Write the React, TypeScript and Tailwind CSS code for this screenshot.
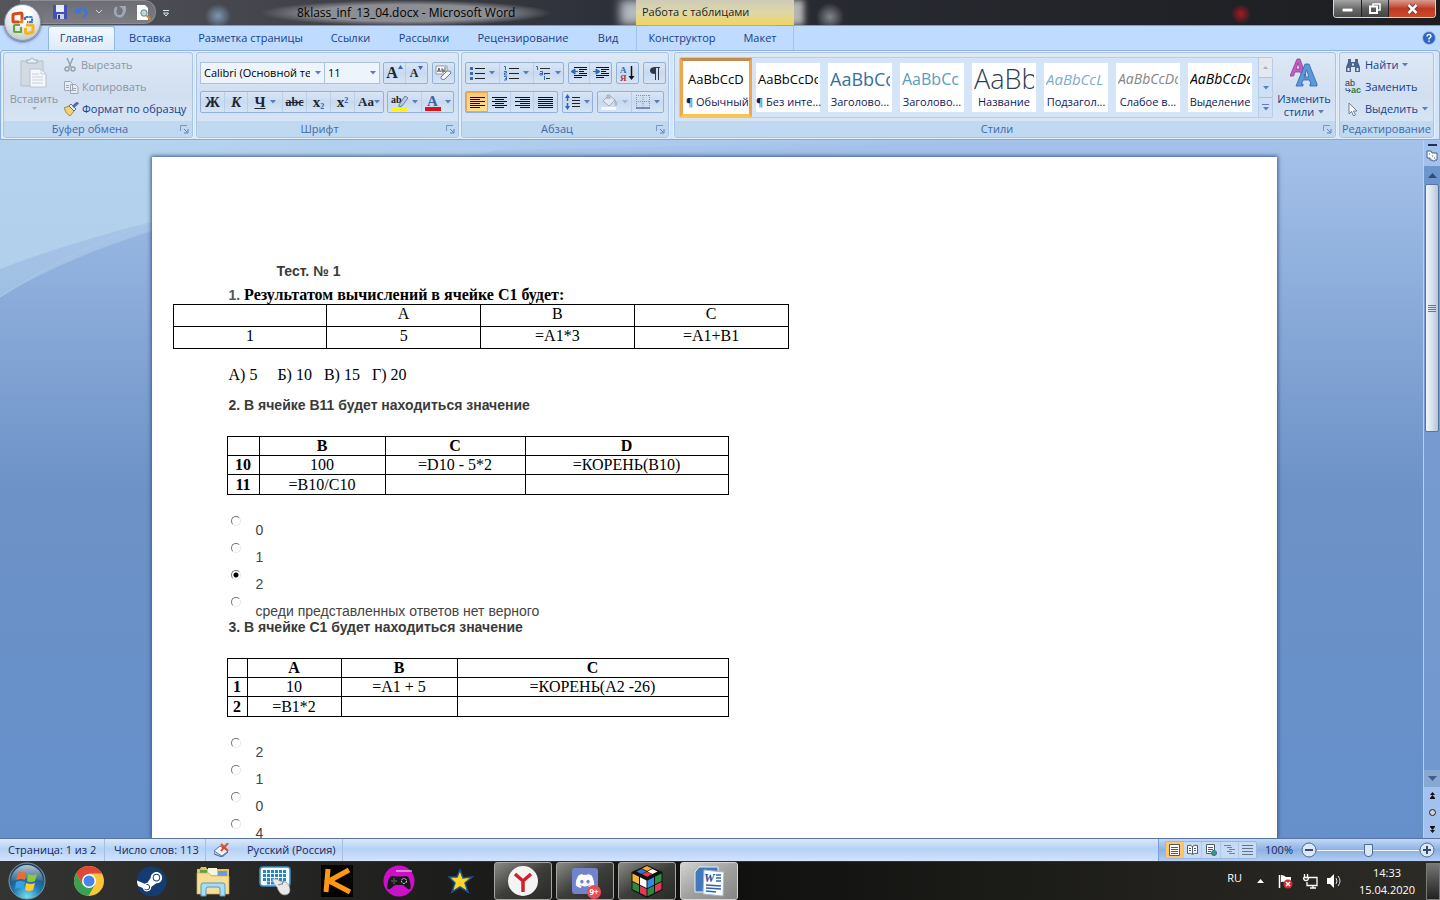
import type { ReactNode } from "react";
import { FaDiscord, FaSteam } from "react-icons/fa";

function Arrow({ className = "" }: { className?: string }) {
  return (
    <svg width="6" height="4" viewBox="0 0 6 4" className={"shrink-0 " + className} aria-hidden="true">
      <path d="M0 0h6L3 3.6z" fill="#5b7fb5" />
    </svg>
  );
}

function Launcher({ label }: { label: string }) {
  return (
    <button aria-label={label} className="flex h-4 w-4 items-center justify-center">
      <svg width="9" height="9" viewBox="0 0 9 9">
        <path d="M.5 6V.5H7" fill="none" stroke="#7696c4" />
        <path d="M4 4l3 3M8 4v4H4" fill="none" stroke="#5c7fb4" />
      </svg>
    </button>
  );
}

function Group({ title, className = "", launcher = true, children }: { title: string; className?: string; launcher?: boolean; children: ReactNode }) {
  return (
    <section
      aria-label={title}
      className={"flex h-[86px] flex-col overflow-hidden rounded-[3px] border border-[#a9c3e2] bg-linear-to-b from-[#dee8f5] via-[#d1dff1] to-[#d9e8f8] shadow-[0_0_0_1px_#e6f0fb] " + className}
    >
      <div className="flex min-h-0 flex-1">{children}</div>
      <div className="flex h-4 shrink-0 items-center bg-[#c1d8f1] text-[11px] text-[#3e6aaa]">
        <span className="flex-1 text-center whitespace-nowrap">{title}</span>
        {launcher && <Launcher label={"Параметры: " + title} />}
      </div>
    </section>
  );
}

function Box({ children, className = "" }: { children: ReactNode; className?: string }) {
  return (
    <div className={"flex h-[22px] items-stretch rounded-[2px] border border-[#93b1d8] bg-linear-to-b from-[#d9e6f6] via-[#c9daf0] to-[#d5e4f6] " + className}>
      {children}
    </div>
  );
}

function Tool({ label, className = "", children }: { label: string; className?: string; children: ReactNode }) {
  return (
    <button aria-label={label} className={"flex items-center justify-center gap-1 border-r border-[#bccfe8] last:border-r-0 " + className}>
      {children}
    </button>
  );
}

function Lines({ widths, align = "left" }: { widths: number[]; align?: "left" | "center" | "right" }) {
  return (
    <svg width="15" height="13" viewBox="0 0 15 13">
      {widths.map((w, i) => (
        <rect key={i} x={align === "left" ? 0 : align === "right" ? 15 - w : (15 - w) / 2} y={1 + i * 2} width={w} height="1" fill="#111" />
      ))}
    </svg>
  );
}

function ListIcon({ kind }: { kind: "bullet" | "number" | "multi" }) {
  return (
    <svg width="15" height="15" viewBox="0 0 15 15">
      {kind === "bullet" && (
        <g fill="#3c68b0">
          <rect x="0" y="1" width="3" height="3" />
          <rect x="0" y="6" width="3" height="3" />
          <rect x="0" y="11" width="3" height="3" />
        </g>
      )}
      {kind === "number" && <path d="M0 .5h1.5V4M0 5.500h2.500v1.500H.5V9H3M0 10.500h2.500V14H0M1 12.500h1" fill="none" stroke="#3c68b0" />}
      {kind === "multi" ? (
        <g fill="none">
          <path d="M0 .5h1.500V4M4 5.500h2.500V9H4V7.500h2M8.500 10v4M8.500 8v1" stroke="#3c68b0" />
          <path d="M4 2.500h10M8 7.500h6M10 12.500h4" stroke="#333" />
        </g>
      ) : (
        <path d="M5 2.500h10M5 7.500h10M5 12.500h10" stroke="#222" />
      )}
    </svg>
  );
}

function Indent({ out = false }: { out?: boolean }) {
  return (
    <svg width="16" height="14" viewBox="0 0 16 14">
      <path d="M3 1.500h13M8 3.500h8M8 5.500h5M8 7.500h8M3 9.500h13M3 11.500h8" stroke="#111" />
      <path d={out ? "M4 3v5L0 5.500zM3 5.500h4" : "M3 3v5l4-2.500zM0 5.500h4"} fill="#3567b5" stroke="#3567b5" />
    </svg>
  );
}

type Style = { name: string; sample: string; look: string };
const styles: Style[] = [
  { name: "¶ Обычный", sample: "AaBbCcDc", look: "text-[13px] text-black" },
  { name: "¶ Без инте...", sample: "AaBbCcDc", look: "text-[13px] text-black" },
  { name: "Заголово...", sample: "AaBbCc", look: "text-[18px] font-medium text-[#366f9f]" },
  { name: "Заголово...", sample: "AaBbCc", look: "text-[16px] font-medium text-[#5a9bbf]" },
  { name: "Название", sample: "AaBb", look: "text-[27px] font-light text-[#2f3d4f]" },
  { name: "Подзагол...", sample: "AaBbCcL", look: "text-[15px] italic text-[#7fadc8]" },
  { name: "Слабое в...", sample: "AaBbCcDc", look: "text-[14px] italic text-[#858585]" },
  { name: "Выделение", sample: "AaBbCcDc", look: "text-[14px] italic text-black" },
];

const tabs = [
  { name: "Вставка", w: "w-[70px]" },
  { name: "Разметка страницы", w: "w-[131px]" },
  { name: "Ссылки", w: "w-[69px]" },
  { name: "Рассылки", w: "w-[78px]" },
  { name: "Рецензирование", w: "w-[120px]" },
  { name: "Вид", w: "w-[50px]" },
];

function OfficeLogo() {
  return (
    <svg width="24" height="24" viewBox="0 0 24 24" fill="none">
      <path d="M11 9V3.500Q11 2 9.500 2L3 3Q2 3 2 4.500V10Q2 11 3 11H8" stroke="#d9481c" strokeWidth="3" />
      <path d="M8 11h3V8" stroke="#ee7c21" strokeWidth="2.500" />
      <path d="M14 9V6h6q1 0 1 1v4h-5" stroke="#3b78c4" strokeWidth="2.200" strokeDasharray="3 .6" />
      <path d="M9 14H4q-1 0-1 1v5q0 1 1 1h6v-5" stroke="#5fa83a" strokeWidth="2.200" />
      <path d="M15 14h6q1 0 1 1v5q0 1-1 1.500l-5 1q-1.500 0-1.500-1.500v-4" stroke="#f4b41a" strokeWidth="3" />
    </svg>
  );
}

function TitleBar() {
  return (
    <header className="flex h-[26px] shrink-0 items-start border-b border-[#8f979f] bg-linear-to-r from-[#55565c] via-[#2c2e37] via-45% to-[#1c1d20]">
      <div className="ml-[20px] flex h-6 w-[136px] items-center gap-2 rounded-r-full border border-l-0 border-[#8d8e94] bg-linear-to-b from-[#6d6e75] to-[#7d7e84] pl-[33px]">
        <button aria-label="Сохранить">
          <svg width="14" height="14" viewBox="0 0 14 14">
            <path d="M0 0h14v14H1L0 13z" fill="#4350b4" />
            <path d="M3 0h8v7H3z" fill="#e9edfb" />
            <path d="M4 9h7v5H4z" fill="#c9d1ee" />
            <path d="M5 10h2v4H5z" fill="#30387e" />
          </svg>
        </button>
        <button aria-label="Отменить" className="flex items-center gap-2">
          <svg width="13" height="12" viewBox="0 0 13 12">
            <path d="M3 4.500q5-4 7.500 0t-2 7" fill="none" stroke="#3f74d6" strokeWidth="2.500" />
            <path d="M0 0v7.500h7z" fill="#3f74d6" />
          </svg>
          <svg width="6" height="4" viewBox="0 0 6 4"><path d="M0 0l3 3 3-3" fill="none" stroke="#c5d2ea" /></svg>
        </button>
        <button aria-label="Вернуть" className="ml-1">
          <svg width="12" height="12" viewBox="0 0 12 12">
            <path d="M2.500 1q-3 6 .5 8.500 5 2.500 7-3V2" fill="none" stroke="#a0a8b8" strokeWidth="2.500" />
            <path d="M5 0h7v6z" fill="#a0a8b8" />
          </svg>
        </button>
        <button aria-label="Предварительный просмотр" className="ml-0.5">
          <svg width="15" height="15" viewBox="0 0 15 15">
            <path d="M1 0h8l3 3v12H1z" fill="#fff" />
            <circle cx="8" cy="8" r="3.200" fill="#bdd6e8" stroke="#6d7f8c" />
            <path d="M10 10l4 4" stroke="#d28b38" strokeWidth="2" />
          </svg>
        </button>
      </div>
      <button aria-label="Настройка панели быстрого доступа" className="flex h-[26px] w-[20px] items-center justify-center">
        <svg width="6" height="7" viewBox="0 0 6 7"><path d="M0 .5h6" stroke="#dbe6f7" /><path d="M.5 3h5L3 6z" fill="none" stroke="#dbe6f7" /></svg>
      </button>
      <div className="flex h-[25px] w-[460px] items-center bg-[radial-gradient(ellipse_13px_12px_at_42px_16px,#7d98b0,transparent)] pl-[83px]">
        <h1 className="bg-[radial-gradient(ellipse_at_center,#8d8e94_45%,transparent_70%)] px-[38px] py-1 text-[12px] leading-[18px] whitespace-nowrap text-black">8klass_inf_13_04.docx - Microsoft Word</h1>
      </div>
      <div className="flex h-[25px] w-[158px] items-center bg-linear-to-b from-[#cfcbb7] via-[#ded7a6] to-[#f1d459] pl-[6px] text-[11px] whitespace-nowrap text-[#222] shadow-[-16px_0_10px_0_#b4b9c2,10px_0_6px_0_#b5b5b3]">
        Работа с таблицами
      </div>
      <div className="flex h-[25px] flex-1 justify-end bg-[radial-gradient(circle_at_36px_17px,#83858c,transparent_14px)]">
        <div className="mr-[50px] h-[25px] w-[80px] bg-[radial-gradient(circle_at_38px_14px,#a81820,transparent_10px)]" />
        <div className="mr-1 flex h-[18px] overflow-hidden rounded-b-[4px] border border-t-0 border-[#d8d8d8]">
          <button aria-label="Свернуть" className="flex w-[28px] items-end justify-center border-r border-[#222] bg-linear-to-b from-[#a5a5a5] via-[#6b6d6b] via-50% to-[#4c4d4d] pb-[5px]">
            <svg width="11" height="4"><rect width="11" height="4" fill="#fff" stroke="#555" /></svg>
          </button>
          <button aria-label="Восстановить" className="flex w-[27px] items-center justify-center border-r border-[#222] bg-linear-to-b from-[#a5a5a5] via-[#5b5d5b] via-50% to-[#444]">
            <svg width="12" height="11" viewBox="0 0 12 11" fill="none" stroke="#fff" strokeWidth="1.500"><path d="M4 3V1h7v6H9" /><path d="M1 3.500h7V10H1z" strokeWidth="2" /></svg>
          </button>
          <button aria-label="Закрыть" className="flex w-[46px] items-center justify-center bg-linear-to-b from-[#d99b90] via-[#bd3a26] via-50% to-[#cf4a2a]">
            <svg width="11" height="10" viewBox="0 0 11 10"><path d="M1.500 1l8 8M9.500 1l-8 8" stroke="#5d302b" strokeWidth="4" /><path d="M1.500 1l8 8M9.500 1l-8 8" stroke="#fff" strokeWidth="2.500" /></svg>
          </button>
        </div>
      </div>
      <button aria-label="Кнопка Office" className="absolute top-[4px] left-[4px] flex h-[37px] w-[37px] items-center justify-center rounded-full border border-[#8994a6] bg-[radial-gradient(circle_at_50%_25%,#fff_20%,#dde0e6_60%,#aeb6c3)] shadow-[0_1px_3px_#4a5a75]">
        <OfficeLogo />
      </button>
    </header>
  );
}

function TabBar() {
  const tab = "flex h-full items-center justify-center whitespace-nowrap";
  return (
    <nav className="flex h-6 shrink-0 bg-[#bfdbff] pl-[48px] text-[11px] text-[#15428b]">
      <button className="flex h-full w-[67px] items-center justify-center rounded-t-[3px] border border-b-0 border-[#93b7e5] bg-linear-to-b from-[#f2f8ff] to-[#dfebf8]">Главная</button>
      {tabs.map((t) => (
        <button key={t.name} className={tab + " " + t.w}>{t.name}</button>
      ))}
      <div className="ml-[3px] flex border-x border-[#a3c2ea]">
        <button className={tab + " w-[90px]"}>Конструктор</button>
        <button className={tab + " w-[66px]"}>Макет</button>
      </div>
      <button aria-label="Справка" className="mr-1 ml-auto flex items-center">
        <svg width="14" height="14" viewBox="0 0 14 14">
          <circle cx="7" cy="7" r="6.500" fill="#2f66c2" stroke="#a9c4ec" />
          <path d="M5 5.500q0-2 2-2t2 1.800q0 1-2 2.200V8.500M7 9.500v1.500" fill="none" stroke="#fff" strokeWidth="1.400" />
        </svg>
      </button>
    </nav>
  );
}

function Clipboard() {
  return (
    <Group title="Буфер обмена" className="w-[190px]">
      <button className="flex w-[60px] flex-col items-center pt-1 text-[11px] leading-[16px] text-[#8d959f]">
        <svg width="28" height="32" viewBox="0 0 28 32">
          <path d="M1 4h22v25H1z" fill="#d3dae3" stroke="#b4bfcb" />
          <path d="M7 6V3h3q2-4 4 0h3v3z" fill="#eef1f4" stroke="#a3aebb" />
          <path d="M10 12h11l5 5v13H10z" fill="#f5f8fb" stroke="#b5c2d1" />
          <path d="M21 12v5h5M12 17h7M12 20h11M12 23h11M12 26h11" fill="none" stroke="#c5d0dc" />
        </svg>
        <span className="mt-[2px]">Вставить</span>
        <svg width="5" height="3"><path d="M0 0h5L2.500 3z" fill="#a5afbb" /></svg>
      </button>
      <div className="flex flex-col pt-[1px] text-[11px] text-[#8d959f]">
        <button className="flex h-[22px] items-center gap-[5px]">
          <svg width="12" height="14" viewBox="0 0 12 14" fill="none" stroke="#98a2ae" strokeWidth="1.500"><path d="M3 0l4 9M9 0L5 9" /><circle cx="3" cy="11" r="2" /><circle cx="9" cy="11" r="2" /></svg>
          Вырезать
        </button>
        <button className="flex h-[22px] items-center gap-[3px]">
          <svg width="15" height="13" viewBox="0 0 15 13" fill="#e8edf3" stroke="#9ca8b7"><path d="M.5.5h6l2 2v7h-8zM6.500 3.500h5l2.500 2.500v6.500H6.500zM8 7.500h4M8 9.500h4M2 4.500h3M2 6.500h3" /></svg>
          Копировать
        </button>
        <button className="flex h-[22px] items-center gap-[3px] whitespace-nowrap text-[#15428b]">
          <svg width="15" height="14" viewBox="0 0 15 14"><path d="M0 6l5-2 5 5-4 5q-4-2-6-8z" fill="#f1d37a" stroke="#a68739" /><path d="M5 4l2-2 5 5-2 2z" fill="#e8edf5" stroke="#61708a" /><path d="M9 5l5-4.500" stroke="#4a6ea9" strokeWidth="3" /></svg>
          Формат по образцу
        </button>
      </div>
    </Group>
  );
}

function FontGroup() {
  const sel = "h-[22px] appearance-none border border-[#abc1de] bg-[#eef4fc] pl-[3px] text-[11px] text-black";
  return (
    <Group title="Шрифт" className="ml-[3px] w-[263px]">
      <div className="flex w-full flex-col gap-[7px] px-[3px] pt-[9px]">
        <div className="flex">
          <label className="relative flex items-center">
            <select aria-label="Шрифт" className={sel + " w-[125px] pr-[14px]"}><option>Calibri (Основной текст)</option></select>
            <Arrow className="absolute right-[4px]" />
          </label>
          <label className="relative flex items-center">
            <select aria-label="Размер шрифта" className={sel + " w-[55px] border-l-0"}><option>11</option></select>
            <Arrow className="absolute right-[4px]" />
          </label>
          <Box className="ml-[3px] font-['Liberation_Serif',serif] font-bold text-[#222]">
            <Tool label="Увеличить размер" className="w-[22px]"><span className="flex items-start text-[16px] leading-[16px]">A<svg width="5" height="4"><path d="M0 4l2.500-4L5 4z" fill="#3c68b0" /></svg></span></Tool>
            <Tool label="Уменьшить размер" className="w-[21px]"><span className="flex items-start text-[12px] leading-[14px]">A<svg width="5" height="4"><path d="M0 0h5L2.500 4z" fill="#3c68b0" /></svg></span></Tool>
          </Box>
          <Box className="ml-1">
            <Tool label="Очистить формат" className="w-[21px]">
              <svg width="17" height="16" viewBox="0 0 17 16">
                <path d="M1 1h11v8H1z" fill="#fff" stroke="#8a97aa" />
                <path d="M2.500 7l1.500-4 1.500 4M3 6h2M7 3v4h2V5H7M10 2v5" fill="none" stroke="#333" strokeWidth=".8" />
                <path d="M6 12l6-6q4-1 4 2l-6 6q-4 2-4-2z" fill="#f4f4f8" stroke="#71798a" />
              </svg>
            </Tool>
          </Box>
        </div>
        <div className="flex">
          <Box className="font-['Liberation_Serif',serif] text-[15px] leading-[18px] font-bold text-[#1d2430]">
            <Tool label="Полужирный" className="w-[24px]"><span>Ж</span></Tool>
            <Tool label="Курсив" className="w-[23px]"><span className="italic">К</span></Tool>
            <Tool label="Подчеркнутый" className="w-[35px]"><span className="underline">Ч</span><Arrow /></Tool>
            <Tool label="Зачеркнутый" className="w-[24px]"><span className="text-[12px] line-through">abc</span></Tool>
            <Tool label="Подстрочный" className="w-[24px]"><span>x<sub className="text-[8px] text-[#2c61b4]">2</sub></span></Tool>
            <Tool label="Надстрочный" className="w-[24px]"><span>x<sup className="text-[8px] text-[#2c61b4]">2</sup></span></Tool>
            <Tool label="Регистр" className="w-[28px]"><span className="-mr-1 text-[13px]">Aa</span><Arrow /></Tool>
          </Box>
          <Box className="ml-[3px]">
            <Tool label="Цвет выделения" className="w-[34px]">
              <svg width="17" height="17" viewBox="0 0 17 17">
                <text x="0" y="9" fontSize="10" fontFamily="Liberation Serif" fontWeight="bold" fill="#222">ab</text>
                <path d="M8 11l6-9 3 2-6 8-3 1z" fill="#b8cde8" stroke="#4d6891" strokeWidth=".8" />
                <path d="M0 13h16v4H0z" fill="#ffef1c" />
              </svg>
              <Arrow />
            </Tool>
            <Tool label="Цвет текста" className="w-[31px]">
              <svg width="16" height="17" viewBox="0 0 16 17" className="overflow-visible">
                <text x="2" y="12" fontSize="15" fontFamily="Liberation Serif" fontWeight="bold" fill="#3f65a5">A</text>
                <path d="M0 13h16v4H0z" fill="#e01212" />
              </svg>
              <Arrow />
            </Tool>
          </Box>
        </div>
      </div>
    </Group>
  );
}

function ParagraphGroup() {
  return (
    <Group title="Абзац" className="ml-[2px] w-[208px]">
      <div className="flex w-full flex-col gap-[7px] px-[3px] pt-[9px]">
        <div className="flex gap-[4px]">
          <Box>
            <Tool label="Маркеры" className="w-[34px]"><ListIcon kind="bullet" /><Arrow /></Tool>
            <Tool label="Нумерация" className="w-[34px]"><ListIcon kind="number" /><Arrow /></Tool>
            <Tool label="Многоуровневый список" className="w-[29px]"><ListIcon kind="multi" /><Arrow /></Tool>
          </Box>
          <Box>
            <Tool label="Уменьшить отступ" className="w-[21px]"><Indent out /></Tool>
            <Tool label="Увеличить отступ" className="w-[21px]"><Indent /></Tool>
          </Box>
          <Box>
            <Tool label="Сортировка" className="w-[21px]">
              <svg width="15" height="17" viewBox="0 0 15 17">
                <text x="0" y="8" fontSize="9" fontFamily="Liberation Serif" fontWeight="bold" fill="#3a64ad">А</text>
                <text x="0" y="16" fontSize="9" fontFamily="Liberation Serif" fontWeight="bold" fill="#ad3644">Я</text>
                <path d="M11.500 1v11" stroke="#111" strokeWidth="1.500" /><path d="M8.500 11h6l-3 4z" fill="#111" />
              </svg>
            </Tool>
          </Box>
          <Box>
            <Tool label="Знаки абзаца" className="w-[21px]">
              <svg width="10" height="13" viewBox="0 0 10 13"><path d="M5 0h5v1H9v12H8V1H6v12H5V7Q0 7 0 3.500T5 0z" fill="#2e3a4c" /></svg>
            </Tool>
          </Box>
        </div>
        <div className="flex gap-[4px]">
          <Box>
            <button aria-label="По левому краю" className="flex w-[22px] items-center justify-center border border-[#e8a95b] bg-linear-to-b from-[#fbc77b] to-[#ffe08c]"><Lines widths={[15, 10, 15, 10, 15, 10]} /></button>
            <Tool label="По центру" className="w-[23px]"><Lines widths={[15, 9, 15, 9, 15, 9]} align="center" /></Tool>
            <Tool label="По правому краю" className="w-[23px]"><Lines widths={[15, 10, 15, 10, 15, 10]} align="right" /></Tool>
            <Tool label="По ширине" className="w-[23px]"><Lines widths={[15, 15, 15, 15, 15, 15]} /></Tool>
          </Box>
          <Box>
            <Tool label="Интервал" className="w-[29px]">
              <svg width="15" height="16" viewBox="0 0 15 16"><path d="M2.500 2v12" stroke="#3263b8" strokeWidth="1.500" strokeDasharray="5 2" /><path d="M0 4l2.500-4L5 4zM0 12l2.500 4L5 12z" fill="#3263b8" /><path d="M7 3.500h8M7 6.500h8M7 9.500h8M7 12.500h8" stroke="#222" /></svg>
              <Arrow />
            </Tool>
          </Box>
          <Box>
            <Tool label="Заливка" className="w-[34px]">
              <svg width="17" height="16" viewBox="0 0 17 16"><path d="M2 7l6-6 6 5-6 6z" fill="#e4e9ef" stroke="#a2adbb" /><path d="M6 5V1h3v4M14 6q3 3 1 6-1-1-1-6z" fill="#b4bfcd" stroke="#9ca8b7" strokeWidth=".6" /><path d="M0 13h15v3H0z" fill="#f8f8f8" /></svg>
              <Arrow className="opacity-40" />
            </Tool>
            <Tool label="Границы" className="w-[31px]">
              <svg width="14" height="14" viewBox="0 0 14 14"><path d="M.5 0v13M7 0v13M13.500 0v13M0 .5h14M0 6.500h14" stroke="#8194b0" strokeDasharray="1 1" /><path d="M0 13h14" stroke="#56739e" strokeWidth="1.500" /></svg>
              <Arrow />
            </Tool>
          </Box>
        </div>
      </div>
    </Group>
  );
}

function StylesGroup() {
  return (
    <Group title="Стили" className="ml-[5px] min-w-0 flex-1">
      <div className="mt-[4px] ml-[4px] flex h-[61px] min-w-0 flex-1 overflow-hidden rounded-[2px] border border-[#b6cce8] bg-[#d5e5f8]">
        <div className="flex min-w-0 flex-1 justify-between">
          {styles.map((s, i) => (
            <button
              key={i}
              className={
                i === 0
                  ? "flex w-[72px] shrink-0 flex-col border-[3px] border-[#efa54b] border-t-[#c38c4b] border-b-[#fbc64f] bg-white px-[3px] py-[2px]"
                  : "my-[5px] mr-[4px] ml-[4px] flex w-[64px] shrink-0 flex-col bg-white"
              }
            >
              <span className="flex w-full px-[2px]">
                <span className={"flex h-[32px] w-full items-center overflow-hidden leading-[30px] whitespace-nowrap " + s.look}>{s.sample}</span>
              </span>
              <span className="w-full text-center text-[11px] leading-[14px] whitespace-nowrap text-[#10205c]">{s.name}</span>
            </button>
          ))}
        </div>
        <div className="ml-[2px] flex w-[14px] shrink-0 flex-col border-l border-[#b6cce8]">
          <button aria-label="Вверх" className="flex flex-1 items-center justify-center bg-[#e5e9ef]"><svg width="5" height="3"><path d="M0 3h5L2.500 0z" fill="#a8b0bc" /></svg></button>
          <button aria-label="Вниз" className="flex flex-1 items-center justify-center border-y border-[#a9c3e4] bg-[#cfe0f5]"><Arrow /></button>
          <button aria-label="Все стили" className="flex flex-1 flex-col items-center justify-center gap-[2px] bg-[#cfe0f5]"><span className="h-px w-[7px] bg-[#5b7fb5]" /><Arrow /></button>
        </div>
      </div>
      <button className="mx-px flex w-[60px] shrink-0 flex-col items-center pt-[5px] text-[11px] leading-[13px] text-[#15428b]">
        <svg width="28" height="29" viewBox="0 0 28 29">
          <path d="M0 18L7 1h3l6 17h-4l-1.500-4H5l-1.500 4zM6 11h4L8 5z" fill="#c060c4" stroke="#8d3d98" strokeWidth=".8" fillRule="evenodd" />
          <path d="M6 28l9-22h4l8 20v2h-7v-2h1l-1.500-4H13l-1.500 4H13v2zM14 19h5l-2.500-7z" fill="#5b99dc" stroke="#2e65a6" strokeWidth=".8" fillRule="evenodd" />
        </svg>
        <span className="mt-[5px]">Изменить</span>
        <span className="flex items-center gap-1">стили<Arrow /></span>
      </button>
    </Group>
  );
}

function EditGroup() {
  const row = "flex h-[22px] items-center gap-[4px] whitespace-nowrap";
  return (
    <Group title="Редактирование" launcher={false} className="ml-[3px] w-[95px]">
      <div className="flex flex-col pt-[1px] pl-[5px] text-[11px] text-[#15428b]">
        <button className={row}>
          <svg width="16" height="13" viewBox="0 0 16 13"><path d="M3 0h3v3h4V0h3v3l2 5v5h-5V8H6v5H1V8l2-5z" fill="#48648f" /><path d="M2.500 9h2v3h-2zM11.500 9h2v3h-2zM7 4.500h2v2H7z" fill="#dfe9f6" /></svg>
          Найти<Arrow />
        </button>
        <button className={row}>
          <svg width="16" height="16" viewBox="0 0 16 16" className="overflow-visible"><text x="0" y="7" fontSize="9" fontFamily="Liberation Sans" fill="#333">ab</text><text x="6" y="14" fontSize="9" fontWeight="bold" fontFamily="Liberation Sans" fill="#357a3c">ac</text><path d="M1 9v2.500h4M3.500 9.500l2 2-2 2" fill="none" stroke="#3d5c90" /></svg>
          Заменить
        </button>
        <button className={row}>
          <svg width="16" height="14" viewBox="0 0 16 14"><path d="M4 1v11l2.500-2.500L8.500 14l2-1-2-4H12z" fill="#fff" stroke="#6f7f97" /></svg>
          Выделить<Arrow />
        </button>
      </div>
    </Group>
  );
}

const cell = "border border-black p-0 text-center";

function Answers({ name, items, checked }: { name: string; items: string[]; checked?: number }) {
  return (
    <fieldset className="mt-[15px] ml-[79px]">
      {items.map((text, i) => (
        <div key={i} className="flex h-[27px]">
          <input
            type="radio"
            id={name + i}
            name={name}
            defaultChecked={i === checked}
            className="mt-[6px] h-[10px] w-[10px] appearance-none rounded-full border border-[#e8e8e8] border-t-[#777] border-l-[#777] checked:bg-[radial-gradient(circle,#000_2px,#fff_3px)]"
          />
          <label htmlFor={name + i} className="ml-[15px] self-end text-[14px] leading-[14px] text-[#444]">{text}</label>
        </div>
      ))}
    </fieldset>
  );
}

function Sheet({ cols, head, rows }: { cols: string[]; head: string[]; rows: string[][] }) {
  return (
    <table className="mt-[22px] ml-[75px] w-[501px] table-fixed border-collapse text-[16px] leading-[18px]">
      <colgroup>{cols.map((c, i) => <col key={i} className={c} />)}</colgroup>
      <thead><tr className="h-[19px]">{head.map((h, i) => <th key={i} className={cell}>{h}</th>)}</tr></thead>
      <tbody>
        {rows.map((r, i) => (
          <tr key={i} className="h-[19px] last:h-[20px]">{r.map((c, j) => (j === 0 ? <th key={j} className={cell}>{c}</th> : <td key={j} className={cell}>{c}</td>))}</tr>
        ))}
      </tbody>
    </table>
  );
}

function Page() {
  const q = "ml-[77px] text-[14px] leading-[18px] font-bold text-[#3a3a3a]";
  const top = cell + " align-top";
  return (
    <article className="relative w-[1125px] shrink-0 bg-white pt-[105px] font-['Liberation_Serif',serif] text-black shadow-[0_0_4px_1px_#3c5a88]">
      <h2 className="ml-[125px] font-['Liberation_Sans',sans-serif] text-[14px] leading-[18px] font-bold text-[#3a3a3a]">Тест. № 1</h2>
      <p className="mt-[6px] ml-[77px] text-[16px] leading-[18px] font-bold"><span className="font-['Liberation_Sans',sans-serif] text-[14px] text-[#555]">1. </span>Результатом вычислений в ячейке C1 будет:</p>
      <table className="ml-[21px] w-[616px] table-fixed border-collapse text-[16px] leading-[18px]">
        <tbody>
          <tr className="h-[22px]"><td className={top} /><td className={top}>A</td><td className={top}>B</td><td className={top}>C</td></tr>
          <tr className="h-[22px]"><td className={top}>1</td><td className={top}>5</td><td className={top}>=A1*3</td><td className={top}>=A1+B1</td></tr>
        </tbody>
      </table>
      <p className="mt-[17px] ml-[77px] text-[16px] leading-[18px] whitespace-pre">А) 5     Б) 10   В) 15   Г) 20</p>
      <h3 className={q + " mt-[12px] font-['Liberation_Sans',sans-serif]"}>2. В ячейке B11 будет находиться значение</h3>
      <Sheet cols={["w-[32px]", "w-[126px]", "w-[140px]", "w-[203px]"]} head={["", "B", "C", "D"]} rows={[["10", "100", "=D10 - 5*2", "=КОРЕНЬ(B10)"], ["11", "=B10/C10", "", ""]]} />
      <div className="font-['Liberation_Sans',sans-serif]">
        <Answers name="q2-" items={["0", "1", "2", "среди представленных ответов нет верного"]} checked={2} />
        <h3 className={q}>3. В ячейке C1 будет находиться значение</h3>
      </div>
      <Sheet cols={["w-[20px]", "w-[94px]", "w-[116px]", "w-[271px]"]} head={["", "A", "B", "C"]} rows={[["1", "10", "=A1 + 5", "=КОРЕНЬ(A2 -26)"], ["2", "=B1*2", "", ""]]} />
      <div className="font-['Liberation_Sans',sans-serif]">
        <Answers name="q3-" items={["2", "1", "0", "4"]} />
      </div>
    </article>
  );
}

function ScrollBar() {
  return (
    <div className="flex w-[17px] shrink-0 flex-col items-center border-l border-[#b7d0f3] bg-[#a3c1ee] pt-[4px]">
      <span className="h-[2px] w-[9px] bg-[#22304a]" />
      <button aria-label="Линейка" className="my-[4px]">
        <svg width="12" height="12" viewBox="0 0 12 12" fill="#f4f7fb" stroke="#50607b"><path d="M1 1h4l1 2h5v7H9l-1 1.500L6 10H4V8H1z" /><path d="M3 4h1M6 6h1M8 8h1" /></svg>
      </button>
      <button aria-label="Прокрутить вверх" className="flex h-[18px] w-full items-center justify-center bg-[#6f96cc]"><svg width="9" height="5"><path d="M0 5h9L4.500 0z" fill="#344c73" /></svg></button>
      <div className="w-full flex-1 bg-linear-to-b from-[#7b9dcf] to-[#7198cf]">
        <div className="ml-px flex h-[248px] w-[14px] flex-col items-center justify-center gap-px rounded-[2px] border border-[#55749f] bg-linear-to-r from-[#f0f5fb] via-[#d8e2ec] to-[#b5c5d8]">
          <span className="h-px w-2 bg-[#657993]" /><span className="h-px w-2 bg-[#657993]" /><span className="h-px w-2 bg-[#657993]" /><span className="h-px w-2 bg-[#657993]" />
        </div>
      </div>
      <button aria-label="Прокрутить вниз" className="flex h-[17px] w-full items-center justify-center bg-[#88a8d4]"><svg width="9" height="5"><path d="M0 0h9L4.500 5z" fill="#3e5d90" /></svg></button>
      <button aria-label="Предыдущая страница" className="flex h-[17px] items-center"><svg width="5" height="7"><path d="M0 3h5L2.500 0zM0 6h5L2.500 3zM0 6h5v1H0z" fill="#111" /></svg></button>
      <button aria-label="Выбор объекта" className="flex h-[17px] items-center"><svg width="7" height="7"><circle cx="3.500" cy="3.500" r="3" fill="#ccd2dc" stroke="#222" /></svg></button>
      <button aria-label="Следующая страница" className="flex h-[17px] items-center"><svg width="5" height="7"><path d="M0 0h5v1H0zM0 1h5L2.500 4zM0 4h5L2.500 7z" fill="#111" /></svg></button>
    </div>
  );
}

function StatusBar() {
  const part = "flex h-full items-center border-r border-[#a3bfe6] whitespace-nowrap";
  return (
    <footer className="flex h-6 shrink-0 items-center border-t border-b border-t-[#56749f] border-b-[#23344f] bg-linear-to-b from-[#dce9fb] via-[#b5d1f7] via-45% to-[#d3e3fa] text-[11px] text-[#15285b]">
      <div className={part + " w-[105px] pl-2"}>Страница: 1 из 2</div>
      <div className={part + " w-[101px] pl-[9px]"}>Число слов: 113</div>
      <div className={part + " w-[137px] pl-2"}>
        <svg width="17" height="14" viewBox="0 0 17 14"><path d="M0 8l6-5 8 5-6 5z" fill="#f5f8fc" stroke="#5b7099" /><path d="M0 9v2l8 3 6-5" fill="none" stroke="#39669c" /><path d="M7 1l7 7M14 0L7 8" stroke="#df4b2d" strokeWidth="2" /></svg>
        <span className="ml-4">Русский (Россия)</span>
      </div>
      <div className="ml-auto flex h-full w-[282px] items-center border-l border-[#7d9fd2] bg-linear-to-b from-[#c2d8f7] via-[#8eb0e2] to-[#b4cdf1] pl-[6px]">
        <div className="flex h-[18px] w-[92px] rounded-[2px] border border-[#9cb8e0] bg-[#c8dbf4]">
          {["Разметка", "Чтение", "Веб", "Структура", "Черновик"].map((n, i) => (
            <button key={n} aria-label={n} className={i === 0 ? "flex flex-1 items-center justify-center bg-[#fbc66c]" : "flex flex-1 items-center justify-center border-l border-[#b1c8e8]"}>
              <svg width="11" height="12" viewBox="0 0 11 12" fill="none" stroke="#4e5a6d">
                {i === 0 && <path d="M.5.5h10v11H.5zM2 3.500h7M2 5.500h7M2 7.500h7M2 9.500h7" fill="#fff" />}
                {i === 1 && <path d="M.5 1.500q3-1 5 1 2-2 5-1v8q-3-1-5 1-2-2-5-1zM5.500 2v8M2 4.500h2M2 6.500h2M7 4.500h2M7 6.500h2" fill="#fff" />}
                {i === 2 && <><path d="M.5.5h8v9h-8zM2 3.500h5M2 5.500h5M2 7.500h3" fill="#fff" /><circle cx="8" cy="9" r="2.500" fill="#459a73" stroke="#316ba5" /></>}
                {i === 3 && <path d="M0 1.500h7M3 3.500h5M5 5.500h6M3 7.500h5M5 9.500h6" opacity=".7" />}
                {i === 4 && <path d="M0 1.500h11M0 4.500h11M0 7.500h11M0 10.500h11" opacity=".8" />}
              </svg>
            </button>
          ))}
        </div>
        <span className="w-[36px] text-right">100%</span>
        <button aria-label="Уменьшить" className="ml-[8px]"><svg width="16" height="16"><circle cx="8" cy="8" r="7" fill="#dce8f8" stroke="#4d6894" /><path d="M4 8h8" stroke="#344c75" strokeWidth="2" /></svg></button>
        <input
          type="range"
          aria-label="Масштаб"
          className="h-[14px] min-w-0 flex-1 appearance-none bg-[linear-gradient(#eff5fd,#eff5fd)] bg-[length:100%_1px] bg-center bg-no-repeat [&::-webkit-slider-thumb]:h-[13px] [&::-webkit-slider-thumb]:w-[9px] [&::-webkit-slider-thumb]:appearance-none [&::-webkit-slider-thumb]:rounded-b-[4px] [&::-webkit-slider-thumb]:border [&::-webkit-slider-thumb]:border-[#4d6894] [&::-webkit-slider-thumb]:bg-[#dce8f8]"
        />
        <button aria-label="Увеличить" className="mr-[5px]"><svg width="16" height="16"><circle cx="8" cy="8" r="7" fill="#dce8f8" stroke="#4d6894" /><path d="M4 8h8M8 4v8" stroke="#344c75" strokeWidth="2" /></svg></button>
      </div>
    </footer>
  );
}

function Cube() {
  const faces = [
    ["M16 1l5 2.500-5 2.500-5-2.500z", "#f7a934"], ["M10.500 4l5 2.500-5 2.500-5-2.500z", "#2f77dd"], ["M21.500 4l5 2.500-5 2.500-5-2.500z", "#fff"], ["M16 6.800l5 2.500-5 2.500-5-2.500z", "#e13a45"],
    ["M1.500 8.500l6.500 3.300v7.400l-6.500-3.300z", "#f4b52c"], ["M9 12.300l6.500 3.300V23L9 19.700z", "#fff"], ["M1.500 17l6.500 3.300v7.200l-6.500-3.300z", "#2a8b3e"], ["M9 20.800l6.500 3.300v7.200L9 28z", "#e13a54"],
    ["M16.500 15.600l6.500-3.300v7.400L16.500 23z", "#2f8de5"], ["M24 11.800l6.500-3.300v7.400L24 19.200z", "#2a9140"], ["M16.500 24.100l6.500-3.300V28l-6.500 3.300z", "#2a8b3e"], ["M24 20.300l6.500-3.300v7.200L24 27.500z", "#e13a54"],
  ];
  return <svg width="32" height="33" viewBox="0 0 32 33"><path d="M16 0l15.500 7v18L16 33 .5 25V7z" fill="#111" />{faces.map(([d, f]) => <path key={d} d={d} fill={f} />)}</svg>;
}

function TaskBar() {
  const slot = "flex h-full w-[62px] items-center justify-center";
  const open = "mx-[2px] flex h-[38px] w-[58px] items-center justify-center rounded-[3px] border border-[#a5a5a2] bg-linear-to-br from-[#8b8b87] via-[#3d3d3a] to-[#2a2a28]";
  return (
    <nav className="flex h-[38px] shrink-0 items-center bg-linear-to-r from-[#343532] via-[#10110f] via-50% to-[#2d2b26] font-['Open_Sans','Noto_Sans',sans-serif] text-white">
      <button aria-label="Пуск" className="flex w-[58px] justify-center pr-1">
        <svg width="38" height="38" viewBox="0 0 38 38">
          <defs>
            <radialGradient id="orb" cx=".5" cy=".95" r=".9"><stop stopColor="#6ce3fb" /><stop offset=".45" stopColor="#2078ad" /><stop offset="1" stopColor="#193d61" /></radialGradient>
            <linearGradient id="shine" x2="0" y2="1"><stop stopColor="#fff" stopOpacity=".7" /><stop offset="1" stopColor="#fff" stopOpacity=".08" /></linearGradient>
          </defs>
          <circle cx="19" cy="19" r="18" fill="url(#orb)" stroke="#8198a9" />
          <path d="M3 19a16 16 0 0132 0q-16-5-32 0z" fill="url(#shine)" />
          <path d="M10 11q4-2 8 0l-1 7q-4-2-9 0z" fill="#ee6a2d" /><path d="M20 12q4 2 9 0l-2 7q-5 2-8 0z" fill="#90c83c" />
          <path d="M8 20q4-2 9 0l-2 7q-4-2-8 0z" fill="#3aa0e2" /><path d="M18 21q5 2 9 0l-2 7q-4 2-8 0z" fill="#fccb35" />
        </svg>
      </button>
      <button aria-label="Chrome" className={slot}>
        <svg width="32" height="32" viewBox="0 0 32 32">
          <circle cx="16" cy="16" r="15" fill="#fbc53a" /><path d="M3 8.500A15 15 0 0129 8.500H16l-6.500 11z" fill="#df4739" /><path d="M3 8.500A15 15 0 0015.500 31l6.500-11.500H9.500z" fill="#38a153" /><circle cx="16" cy="16" r="7" fill="#fff" /><circle cx="16" cy="16" r="5.500" fill="#4685ec" />
        </svg>
      </button>
      <button aria-label="Steam" className={slot}><span className="rounded-full bg-[radial-gradient(circle_closest-side,#fff_90%,transparent_94%)]"><FaSteam size={31} color="#153c72" /></span></button>
      <button aria-label="Проводник" className={slot}>
        <svg width="34" height="32" viewBox="0 0 34 32">
          <path d="M1 4h3l1-2h5l1 2h22v23H1z" fill="#e3c264" /><path d="M4 5h7v5H4z" fill="#61a044" /><path d="M12 3h9v7h-9z" fill="#f8f4e3" /><path d="M22 6h9v6h-9z" fill="#6b9bd1" />
          <path d="M1 8h12l2 3h18v18H1z" fill="#f5df97" stroke="#cfa94a" strokeWidth=".7" /><path d="M5 31V20q0-2 2-2h20q2 0 2 2v11h-5v-7q0-2-2-2H12q-2 0-2 2v7z" fill="#a9dcf3" stroke="#579bc2" />
        </svg>
      </button>
      <button aria-label="Экранная клавиатура" className={slot}>
        <svg width="33" height="32" viewBox="0 0 33 32">
          <rect x="1" y="2" width="30" height="19" rx="3" fill="#f5fafd" stroke="#3692cd" strokeWidth="1.500" /><path d="M4 6.500h24M4 10.500h24M4 14.500h24M8 18h15" stroke="#2784c5" strokeWidth="3" strokeDasharray="3 1" />
          <path d="M13 14q5-1 8 2l6 1q4 3 4 8 0 5-6 5-5-1-7-8-3-2-5-8z" fill="#e8e8e8" stroke="#888" strokeWidth=".7" /><path d="M19 20q4 0 6-4M23 20l1-3" fill="none" stroke="#888" />
        </svg>
      </button>
      <button aria-label="K" className={slot}><svg width="32" height="32"><path d="M0 0h32v32H0z" fill="#050300" /><path d="M7 4L5 27M28 5L8 16l21 11" fill="none" stroke="#ff9712" strokeWidth="5" /></svg></button>
      <button aria-label="Игры" className={slot}>
        <svg width="32" height="32" viewBox="0 0 32 32"><circle cx="16" cy="16" r="15.500" fill="#cc10c8" /><path d="M13 6h16" stroke="#eee" /><path d="M9 11q7 1 14 0 3 0 4 6 2 9-2 7l-5-4h-8l-5 4q-4 2-2-7 1-6 4-6z" fill="#171819" /><path d="M8 16h6M11 13v6" stroke="#444" strokeWidth="2" /><circle cx="21" cy="16" r="2.500" fill="none" stroke="#eee" strokeDasharray="2 1" /></svg>
      </button>
      <button aria-label="Избранное" className={slot}><svg width="26" height="27" viewBox="0 0 26 27"><path d="M12 2l3 8 9-1-7 6 3 9-8-5-8 5 3-9-6-6h8z" fill="#ffd52a" stroke="#1d5293" strokeWidth="1.500" /></svg></button>
      <button aria-label="Яндекс" className={open}><svg width="30" height="30"><circle cx="15" cy="15" r="15" fill="#f4f4f4" /><path d="M7 8l8 7 8-7M15 14v12" fill="none" stroke="#cf202b" strokeWidth="3.500" /></svg></button>
      <button aria-label="Discord" className={open}>
        <span className="relative flex h-[26px] w-[26px] items-center justify-center rounded-[3px] bg-[#7183cc]"><FaDiscord size={20} color="#fff" /><span className="absolute -right-[3px] -bottom-[5px] flex h-[14px] w-[14px] items-center justify-center rounded-full bg-[#ed4c55] text-[8px] font-bold">9+</span></span>
      </button>
      <button aria-label="Кубик" className={open}><Cube /></button>
      <button aria-label="Microsoft Word" className="mx-[2px] flex h-[38px] w-[58px] items-center justify-center rounded-[3px] border border-[#d5d5d5] bg-linear-to-br from-[#d2d2d0] via-[#a2a2a1] to-[#858583]">
        <svg width="30" height="31" viewBox="0 0 30 31"><path d="M5 1h19v25H1V6z" fill="#4279bb" stroke="#e4effa" /><path d="M10 4l20 2-1 24-20-2z" fill="#fafcff" stroke="#a4b6ce" /><text x="10" y="16" fontSize="12" fontFamily="Liberation Serif" fontStyle="italic" fontWeight="bold" fill="#254b91">W</text><path d="M22 9h5M22 12h5M22 15h5M12 19l15 1M12 22l15 1M12 25l10 1" stroke="#3164a8" strokeWidth="1.500" /></svg>
      </button>
      <div className="ml-auto flex items-center text-[11px]">
        <button className="mr-[15px] pb-[6px]">RU</button>
        <button aria-label="Скрытые значки" className="mr-[14px]"><svg width="7" height="4"><path d="M0 4h7L3.500 0z" fill="#fff" /></svg></button>
        <button aria-label="Центр поддержки" className="mr-[9px]"><svg width="16" height="15"><path d="M1.500 1v13" stroke="#fff" strokeWidth="1.500" /><path d="M3 1q3 0 5 2h5v6H8Q6 7 3 8z" fill="#fff" /><circle cx="10" cy="10" r="4.500" fill="#d72b31" /><path d="M8 8l4 4M12 8l-4 4" stroke="#fff" strokeWidth="1.500" /></svg></button>
        <button aria-label="Сеть" className="mr-[9px]"><svg width="15" height="15" fill="none" stroke="#fff"><path d="M6 3.500h8v8H4V8M7 14h6M10 11v3M1.500 0v3M4.500 0v3M.5 3.500h5q0 3-2.500 3t-2.500-3" strokeWidth="1.300" /></svg></button>
        <button aria-label="Громкость"><svg width="15" height="14"><path d="M0 4h3l4-4v14l-4-4H0z" fill="#fff" /><path d="M9 4q2 3 0 6M11 2q4 5 0 10" fill="none" stroke="#ddd" /></svg></button>
        <div className="ml-[16px] w-[58px] text-center leading-[17px]"><div>14:33</div><div>15.04.2020</div></div>
        <button aria-label="Показать рабочий стол" className="ml-[10px] h-[37px] w-[14px] border border-[#7a7a78] bg-linear-to-b from-[#777] to-[#222]" />
      </div>
    </nav>
  );
}

export default function App() {
  return (
    <div className="relative flex h-screen flex-col overflow-hidden font-['Open_Sans','Noto_Sans',sans-serif]">
      <TitleBar />
      <TabBar />
      <div className="flex h-[90px] shrink-0 items-start rounded-t-[3px] border border-[#8db2e3] border-b-[#86a9d6] bg-[#d2e5fb] px-[2px] pt-px pr-[5px]">
        <Clipboard />
        <FontGroup />
        <ParagraphGroup />
        <StylesGroup />
        <EditGroup />
      </div>
      <main className="flex min-h-0 flex-1">
        <div className="relative flex min-w-0 flex-1 justify-center overflow-hidden bg-linear-to-b from-[#a5c2ea] via-[#6d92c7] via-50% to-[#6590cb] pt-[17px] pl-[5px]">
          <svg className="absolute top-0 left-0" width="1000" height="170" viewBox="0 0 1000 170" aria-hidden="true">
            <defs>
              <linearGradient id="sky" x2="1"><stop offset=".15" stopColor="#b9d7ef" stopOpacity=".85" /><stop offset="1" stopColor="#b9d7ef" stopOpacity="0" /></linearGradient>
            </defs>
            <path d="M0 0h1000L500 20Q150 65 0 157z" fill="url(#sky)" opacity=".5" />
            <path d="M0 0h1000L500 10Q150 70 0 129z" fill="url(#sky)" opacity=".8" />
            <path d="M0 157Q80 104 160 80" fill="none" stroke="#abc8eb" />
          </svg>
          <Page />
        </div>
        <ScrollBar />
      </main>
      <StatusBar />
      <TaskBar />
    </div>
  );
}
